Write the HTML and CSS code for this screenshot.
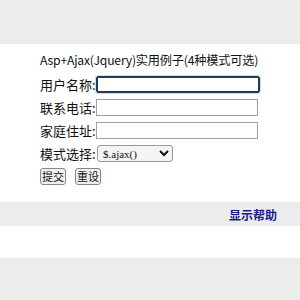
FILE: index.html
```html
<!DOCTYPE html>
<html lang="zh-CN">
<head>
    <meta charset="UTF-8">
    <title>Asp+Ajax(Jquery)实用例子</title>
    <link rel="stylesheet" href="styles.css">
</head>
<body>
    <div class="top"></div>
    <div class="main">
        <div class="title">Asp+Ajax(Jquery)实用例子(4种模式可选)</div>
        <div class="row">
            <label for="username">用户名称:</label>
            <input type="text" id="username" class="txt focus">
        </div>
        <div class="row">
            <label for="tel">联系电话:</label>
            <input type="text" id="tel" class="txt">
        </div>
        <div class="row">
            <label for="addr">家庭住址:</label>
            <input type="text" id="addr" class="txt">
        </div>
        <div class="row">
            <label for="mode">模式选择:</label>
            <select id="mode" class="sel">
                <option>$.ajax()</option>
                <option>$.get()</option>
                <option>$.post()</option>
                <option>$.getJSON()</option>
            </select>
        </div>
        <div class="btns">
            <button type="button" class="btn">提交</button>
            <button type="reset" class="btn">重设</button>
        </div>
    </div>
    <div class="helpbar">
        <a href="#" class="help">显示帮助</a>
    </div>
    <div class="gap"></div>
    <div class="bottom"></div>
</body>
</html>
```

FILE: styles.css
```css
body {
    margin: 0;
    background: #fff;
    font-family: "Noto Sans CJK SC", "Liberation Sans", sans-serif;
    font-size: 13px;
    color: #111;
}
.top {
    height: 44px;
    background: #ececec;
}
.main {
    padding: 6px 0 0 40px;
    height: 152px;
}
.title {
    height: 20px;
    line-height: 20px;
    margin-bottom: 3px;
    font-size: 12.2px;
    letter-spacing: -0.2px;
}
.row {
    display: flex;
    align-items: center;
    height: 23px;
}
.row label {
    width: 56px;
    white-space: nowrap;
}
.txt {
    width: 158px;
    height: 13px;
    padding: 1px;
    border: 1px solid #a0a0a0;
    font-size: 12px;
    margin: 0;
}
.txt.focus {
    border: 2px solid #1f3c5c;
    border-radius: 2px;
    width: 158px;
    height: 11px;
    outline: 1px solid #bfe0f5;
}
.sel {
    width: 76px;
    height: 17px;
    font-size: 11px;
    font-weight: normal;
    font-family: "Liberation Serif", serif;
    border: 1px solid #999;
    border-radius: 3px;
    background: #f4f4f4;
    color: #111;
    padding: 0 1px;
    margin: 0 0 0 1px;
}
.btns {
    display: flex;
    gap: 9px;
    margin-top: 3px;
}
.btn {
    height: 17px;
    padding: 0 1px;
    font-family: "Noto Sans CJK SC", sans-serif;
    font-size: 11px;
    line-height: 13px;
    border: 1px solid #888;
    border-radius: 3px;
    background: #f0f0f0;
    color: #111;
}
.helpbar {
    height: 24px;
    background: #ececec;
    display: flex;
    justify-content: flex-end;
    align-items: center;
    padding-right: 23px;
}
.help {
    color: #1a1a8c;
    font-weight: bold;
    font-size: 12px;
    text-decoration: none;
}
.gap {
    height: 32px;
}
.bottom {
    height: 42px;
    background: #ececec;
}
```
